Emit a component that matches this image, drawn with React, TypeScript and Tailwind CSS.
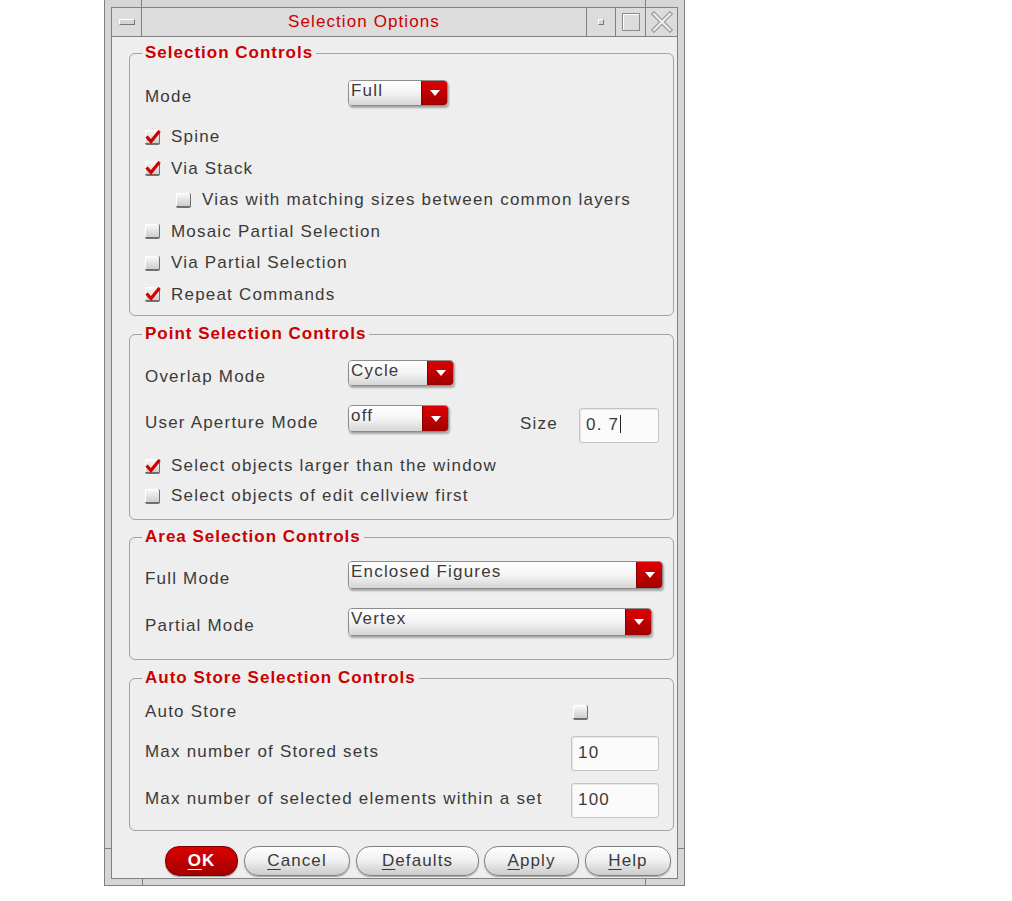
import type { ReactNode } from 'react';

const font = "font-['Liberation_Sans',Arial,sans-serif]";

function Group({ title, children }: { title: string; children: ReactNode }) {
  return (
    <fieldset className="rounded-[6px] border border-[#a3a3a3] pl-[15px] pr-[8px]">
      <legend className="-ml-[3px] h-[20px] px-[3px] text-[17px] font-bold leading-[20px] tracking-[1px] text-[#cc0000]">
        {title}
      </legend>
      {children}
    </fieldset>
  );
}

function Select({ value, className }: { value: string; className: string }) {
  return (
    <div className={`flex shrink-0 overflow-hidden rounded-[4px] border border-[#8c8c8c] shadow-[1px_2px_2px_rgba(0,0,0,0.3)] ${className}`}>
      <div className="flex-1 bg-linear-to-b from-white via-[#f4f4f4] to-[#d6d6d6] pl-[2px] leading-[20px]">{value}</div>
      <div className="flex w-[26px] items-center justify-center border-l border-[#8a0000] bg-linear-to-b from-[#e00000] to-[#a00000]">
        <svg width="10" height="6" viewBox="0 0 10 6">
          <path d="M0 0h10L5 6z" fill="#ffffff" />
        </svg>
      </div>
    </div>
  );
}

function Box({ checked }: { checked?: boolean }) {
  return (
    <span className="relative inline-block h-[15px] w-[15px] shrink-0 rounded-[2px] border-b-2 border-r border-[#6f6f6f] bg-linear-to-b from-[#fbfbfb] to-[#cdcdcd] shadow-[inset_1px_1px_0_#ffffff]">
      {checked && (
        <svg className="absolute -left-[1px] -top-[3px]" width="18" height="18" viewBox="0 0 18 18">
          <path d="M2.5 9.5 L7 14.5 L15.5 4" fill="none" stroke="#d40000" strokeWidth="3.2" strokeLinejoin="miter" />
        </svg>
      )}
    </span>
  );
}

function CheckRow({ label, checked, indent, h }: { label: string; checked?: boolean; indent?: boolean; h: string }) {
  return (
    <div className={`flex items-center ${h} ${indent ? 'pl-[31px]' : ''}`}>
      <Box checked={checked} />
      <span className="ml-[11px]">{label}</span>
    </div>
  );
}

function Field({ children, className }: { children: ReactNode; className: string }) {
  return (
    <div className={`shrink-0 rounded-[3px] border border-[#c4c4c4] bg-[#fbfbfb] pl-[6px] leading-[31px] shadow-[inset_1px_1px_1px_rgba(0,0,0,0.08)] ${className}`}>
      {children}
    </div>
  );
}

function Btn({ children, className, primary }: { children: ReactNode; className: string; primary?: boolean }) {
  const look = primary
    ? 'border-[#7a0000] bg-linear-to-b from-[#dc0000] to-[#a40000] font-bold text-white'
    : 'border-[#808080] bg-linear-to-b from-white via-[#efefef] to-[#cbcbcb] text-[#3a3a3a]';
  return (
    <button className={`h-[30px] shrink-0 rounded-[14px] border text-[17px] tracking-[1.1px] shadow-[0_1px_1px_rgba(0,0,0,0.3)] ${look} ${className}`}>
      {children}
    </button>
  );
}

export default function App() {
  return (
    <div className={`min-h-screen bg-white ${font} text-[17px] leading-[20px] tracking-[1.2px] text-[#3a3a3a]`}>
      <div className="relative ml-[104px] h-[886px] w-[581px] border-x border-b border-[#808080] bg-[#d6d6d6] px-[6px] pb-[6px] pt-[7px]">
        {/* frame corner ticks */}
        <span className="absolute left-[36px] top-0 h-[7px] w-px bg-[#808080]" />
        <span className="absolute left-[540px] top-0 h-[7px] w-px bg-[#808080]" />
        <span className="absolute bottom-0 left-[37px] h-[7px] w-px bg-[#808080]" />
        <span className="absolute bottom-0 left-[540px] h-[7px] w-px bg-[#808080]" />
        <span className="absolute left-0 top-[848px] h-px w-[6px] bg-[#808080]" />
        <span className="absolute right-0 top-[848px] h-px w-[6px] bg-[#808080]" />

        <div className="flex h-full flex-col border border-[#808080]">
          {/* title bar */}
          <div className="flex h-[29px] shrink-0 border-b border-[#808080] bg-[#dcdcdc]">
            <div className="flex w-[30px] items-center justify-center border-r border-[#808080]">
              <span className="h-[6px] w-[16px] border border-b-[#777] border-l-white border-r-[#777] border-t-white bg-[#d4d4d4]" />
            </div>
            <div className="flex w-[445px] items-center justify-center border-r border-[#808080] tracking-[1.1px] text-[#cc0000]">
              Selection Options
            </div>
            <div className="flex w-[29px] items-center justify-center border-r border-[#808080]">
              <span className="h-[6px] w-[6px] border border-b-[#777] border-l-white border-r-[#777] border-t-white bg-[#d4d4d4]" />
            </div>
            <div className="flex w-[30px] items-center justify-center border-r border-[#808080]">
              <span className="h-[18px] w-[18px] border border-[#8a8a8a] shadow-[inset_1px_1px_0_#ffffff]" />
            </div>
            <div className="flex w-[31px] items-center justify-center">
              <svg width="22" height="22" viewBox="0 0 22 22">
                <path d="M3 3 L19 19 M19 3 L3 19" stroke="#9a9a9a" strokeWidth="4.5" strokeLinecap="square" />
                <path d="M3 3 L19 19 M19 3 L3 19" stroke="#ececec" strokeWidth="2.2" strokeLinecap="square" />
              </svg>
            </div>
          </div>

          {/* client */}
          <div className="flex flex-1 flex-col bg-[#eeeeee] pl-[17px] pr-[3px] pt-[6px]">
            <Group title="Selection Controls">
              <div className="mt-[17px] flex h-[26px] items-center">
                <span className="mt-[7px] w-[203px]">Mode</span>
                <Select value="Full" className="h-[26px] w-[100px]" />
              </div>
              <div className="mt-[15.5px] pb-[4.5px]">
                <CheckRow h="h-[31.5px]" checked label="Spine" />
                <CheckRow h="h-[31.5px]" checked label="Via Stack" />
                <CheckRow h="h-[31.5px]" indent label="Vias with matching sizes between common layers" />
                <CheckRow h="h-[31.5px]" label="Mosaic Partial Selection" />
                <CheckRow h="h-[31.5px]" label="Via Partial Selection" />
                <CheckRow h="h-[31.5px]" checked label="Repeat Commands" />
              </div>
            </Group>

            <div className="mt-[8px]">
              <Group title="Point Selection Controls">
                <div className="mt-[16px] flex h-[26px] items-center">
                  <span className="mt-[7px] w-[203px]">Overlap Mode</span>
                  <Select value="Cycle" className="h-[26px] w-[106px]" />
                </div>
                <div className="mt-[19px] flex h-[38px] items-start">
                  <span className="mt-[8px] w-[203px]">User Aperture Mode</span>
                  <Select value="off" className="h-[27px] w-[101px]" />
                  <span className="ml-[71px] mt-[9px] w-[59px]">Size</span>
                  <Field className="mt-[3px] h-[35px] w-[80px]">
                    0. 7<span className="ml-[1px] inline-block h-[18px] w-px translate-y-[3px] bg-[#222]" />
                  </Field>
                </div>
                <div className="mt-[8px] pb-[8px]">
                  <CheckRow h="h-[30px]" checked label="Select objects larger than the window" />
                  <CheckRow h="h-[30px]" label="Select objects of edit cellview first" />
                </div>
              </Group>
            </div>

            <div className="mt-[7px]">
              <Group title="Area Selection Controls">
                <div className="mt-[14px] flex h-[28px] items-center">
                  <span className="mt-[8px] w-[203px]">Full Mode</span>
                  <Select value="Enclosed Figures" className="h-[28px] w-[315px]" />
                </div>
                <div className="mt-[19px] flex h-[28px] items-center pb-0">
                  <span className="mt-[8px] w-[203px]">Partial Mode</span>
                  <Select value="Vertex" className="h-[28px] w-[304px]" />
                </div>
                <div className="h-[23px]" />
              </Group>
            </div>

            <div className="mt-[8px]">
              <Group title="Auto Store Selection Controls">
                <div className="mt-[12px] flex h-[24px] items-center">
                  <span className="w-[428px]">Auto Store</span>
                  <Box />
                </div>
                <div className="mt-[12px] flex h-[35px] items-center">
                  <span className="-mt-[3px] w-[426px]">Max number of Stored sets</span>
                  <Field className="h-[35px] w-[88px]">10</Field>
                </div>
                <div className="mt-[12px] flex h-[35px] items-center pb-0">
                  <span className="-mt-[3px] w-[426px]">Max number of selected elements within a set</span>
                  <Field className="h-[35px] w-[88px]">100</Field>
                </div>
                <div className="h-[12px]" />
              </Group>
            </div>

            <div className="mt-[15px] flex pl-[36px]">
              <Btn primary className="w-[73px]">
                <span className="underline underline-offset-[3px]">O</span>K
              </Btn>
              <Btn className="ml-[6px] w-[106px]">
                <span className="underline underline-offset-[3px]">C</span>ancel
              </Btn>
              <Btn className="ml-[6px] w-[123px]">
                <span className="underline underline-offset-[3px]">D</span>efaults
              </Btn>
              <Btn className="ml-[5px] w-[95px]">
                <span className="underline underline-offset-[3px]">A</span>pply
              </Btn>
              <Btn className="ml-[6px] w-[86px]">
                <span className="underline underline-offset-[3px]">H</span>elp
              </Btn>
            </div>
          </div>
        </div>
      </div>
    </div>
  );
}
